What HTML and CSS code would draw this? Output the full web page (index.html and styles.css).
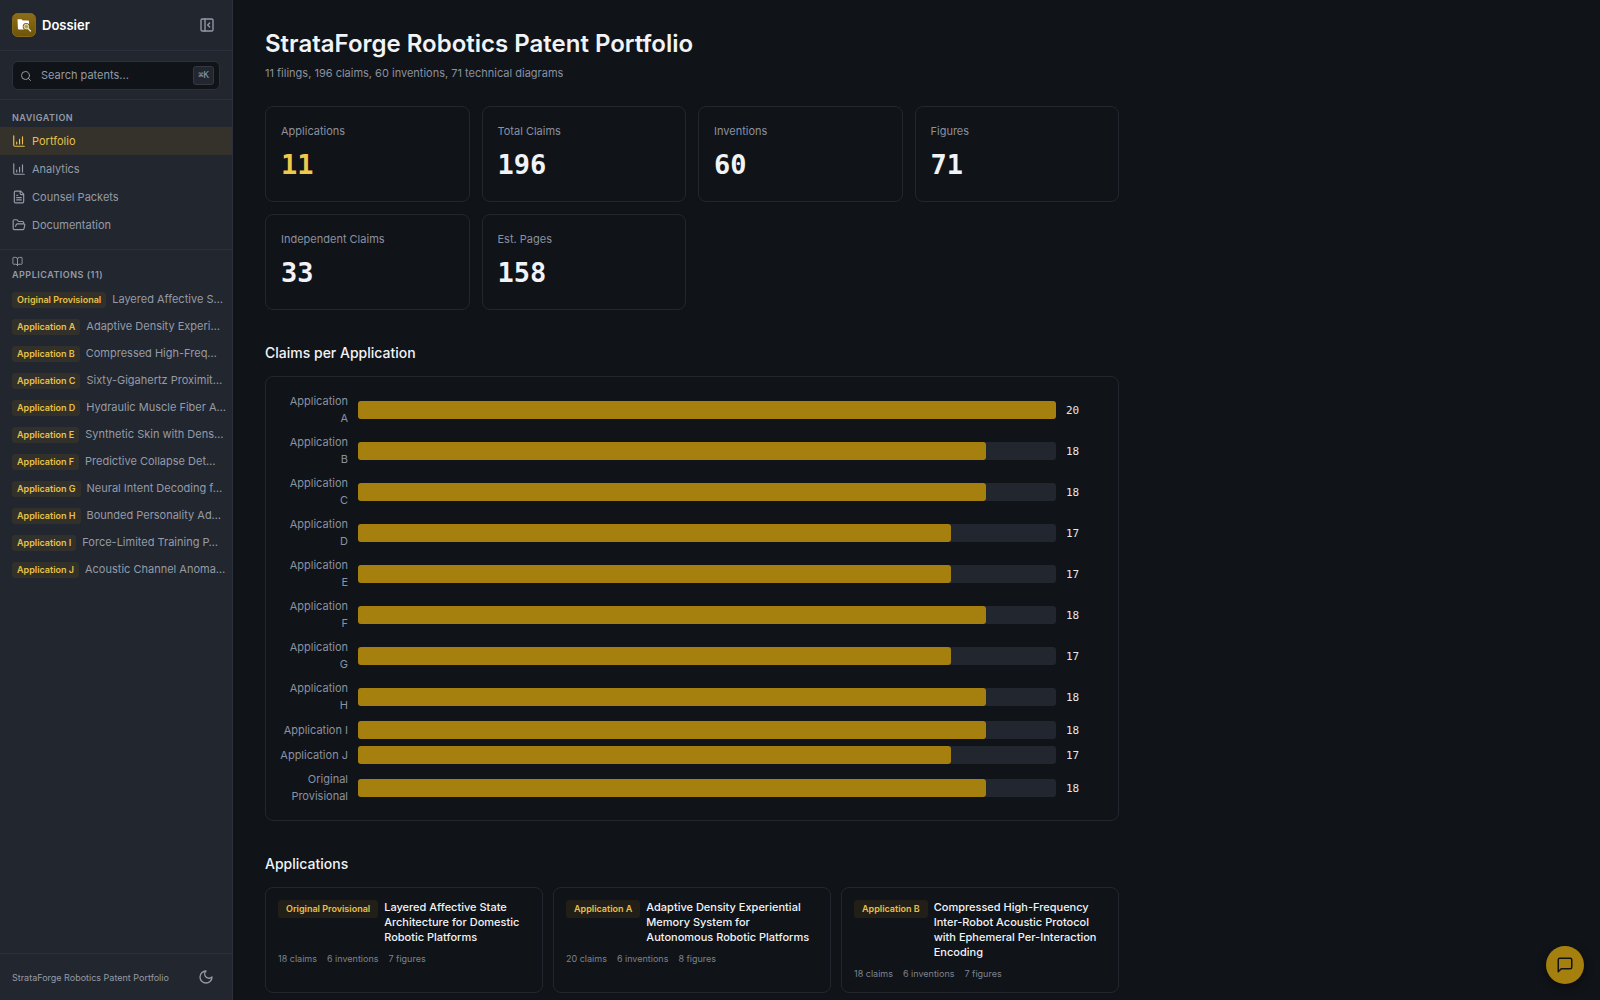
FILE: index.html
```
<!DOCTYPE html>
<html lang="en">
<head>
	<meta charset="UTF-8">
	<meta name="viewport" content="width=device-width, initial-scale=1">
	<title>StrataForge Robotics Patent Portfolio</title>
	<link rel="stylesheet" href="styles.css">
</head>
<body>

	<aside class="sidebar">
		<div class="brand">
			<svg class="logo" viewBox="0 0 24 24">
				<defs>
					<linearGradient id="gold" x1="0" y1="0" x2="0" y2="1">
						<stop offset="0" stop-color="#8c6d18"/>
						<stop offset="1" stop-color="#6f5508"/>
					</linearGradient>
				</defs>
				<rect x="0.5" y="0.5" width="23" height="23" rx="5" fill="url(#gold)" stroke="#84681c"/>
				<path d="M5.500 6.200h4l1.200 1.300h5.300a1 1 0 0 1 1 1v7a1 1 0 0 1-1 1H6.900a1 1 0 0 1-1-1z" fill="#fff"/>
				<circle cx="14.300" cy="13.600" r="2.600" fill="#b39d5c" stroke="#7a5f10" stroke-width="2"/>
				<circle cx="14.300" cy="13.600" r="2.300" fill="#b39d5c" stroke="#efe6cc" stroke-width="1"/>
				<path d="M16.300 15.700l2.200 2.300" stroke="#f3ead0" stroke-width="1.300" stroke-linecap="round"/>
			</svg>
			<span class="brand-name">Dossier</span>
			<button class="icon-button" aria-label="Collapse sidebar">
				<svg class="icon" viewBox="0 0 24 24"><rect x="3" y="3" width="18" height="18" rx="2"/><path d="M9 3v18M16 15l-3-3 3-3"/></svg>
			</button>
		</div>

		<div class="search-wrap">
			<div class="search">
				<svg class="icon small" viewBox="0 0 24 24"><circle cx="11" cy="11" r="8"/><path d="M21 21l-4.300-4.300"/></svg>
				<input type="text" class="search-input" placeholder="Search patents..." aria-label="Search patents">
				<kbd>⌘K</kbd>
			</div>
		</div>

		<nav class="nav">
			<h2 class="label">Navigation</h2>
			<a href="#" class="active">
				<svg class="icon" viewBox="0 0 24 24"><path d="M3 3v16a2 2 0 0 0 2 2h16M18 17V5M13 17V9M8 17v-3"/></svg>
				Portfolio
			</a>
			<a href="#">
				<svg class="icon" viewBox="0 0 24 24"><path d="M3 3v16a2 2 0 0 0 2 2h16M18 17V5M13 17V9M8 17v-3"/></svg>
				Analytics
			</a>
			<a href="#">
				<svg class="icon" viewBox="0 0 24 24"><path d="M15 2H6a2 2 0 0 0-2 2v16a2 2 0 0 0 2 2h12a2 2 0 0 0 2-2V7zM14 2v4a2 2 0 0 0 2 2h4M10 9H8M16 13H8M16 17H8"/></svg>
				Counsel Packets
			</a>
			<a href="#">
				<svg class="icon" viewBox="0 0 24 24"><path d="M6 14l1.500-2.900A2 2 0 0 1 9.240 10H20a2 2 0 0 1 1.940 2.500l-1.540 6a2 2 0 0 1-1.950 1.500H4a2 2 0 0 1-2-2V5a2 2 0 0 1 2-2h3.900a2 2 0 0 1 1.690.9l.81 1.200a2 2 0 0 0 1.670.9H18a2 2 0 0 1 2 2v2"/></svg>
				Documentation
			</a>
		</nav>

		<div class="apps">
			<svg class="icon tiny" viewBox="0 0 24 24"><path d="M12 7v14M3 18a1 1 0 0 1-1-1V4a1 1 0 0 1 1-1h5a4 4 0 0 1 4 4 4 4 0 0 1 4-4h5a1 1 0 0 1 1 1v13a1 1 0 0 1-1 1h-6a3 3 0 0 0-3 3 3 3 0 0 0-3-3z"/></svg>
			<h2 class="label">Applications (11)</h2>
			<a href="#"><span class="badge">Original Provisional</span><span class="name">Layered Affective S…</span></a>
			<a href="#"><span class="badge">Application A</span><span class="name">Adaptive Density Experi…</span></a>
			<a href="#"><span class="badge">Application B</span><span class="name">Compressed High-Freq…</span></a>
			<a href="#"><span class="badge">Application C</span><span class="name">Sixty-Gigahertz Proximit…</span></a>
			<a href="#"><span class="badge">Application D</span><span class="name">Hydraulic Muscle Fiber A…</span></a>
			<a href="#"><span class="badge">Application E</span><span class="name">Synthetic Skin with Dens…</span></a>
			<a href="#"><span class="badge">Application F</span><span class="name">Predictive Collapse Det…</span></a>
			<a href="#"><span class="badge">Application G</span><span class="name">Neural Intent Decoding f…</span></a>
			<a href="#"><span class="badge">Application H</span><span class="name">Bounded Personality Ad…</span></a>
			<a href="#"><span class="badge">Application I</span><span class="name">Force-Limited Training P…</span></a>
			<a href="#"><span class="badge">Application J</span><span class="name">Acoustic Channel Anoma…</span></a>
		</div>

		<div class="sidebar-footer">
			<span>StrataForge Robotics Patent Portfolio</span>
			<button class="icon-button" aria-label="Toggle theme">
				<svg class="icon" viewBox="0 0 24 24"><path d="M12 3a6 6 0 0 0 9 9 9 9 0 1 1-9-9z"/></svg>
			</button>
		</div>
	</aside>

	<main class="main">
		<div class="content">
			<h1>StrataForge Robotics Patent Portfolio</h1>
			<p class="subtitle">11 filings, 196 claims, 60 inventions, 71 technical diagrams</p>

			<div class="stats">
				<div class="card stat"><span>Applications</span><strong class="gold">11</strong></div>
				<div class="card stat"><span>Total Claims</span><strong>196</strong></div>
				<div class="card stat"><span>Inventions</span><strong>60</strong></div>
				<div class="card stat"><span>Figures</span><strong>71</strong></div>
				<div class="card stat"><span>Independent Claims</span><strong>33</strong></div>
				<div class="card stat"><span>Est. Pages</span><strong>158</strong></div>
			</div>

			<h2 class="section-title">Claims per Application</h2>
			<div class="card chart">
				<div class="row"><span class="row-label">Application<br>A</span><div class="track"><div class="fill" style="width: 100%"></div></div><span class="value">20</span></div>
				<div class="row"><span class="row-label">Application<br>B</span><div class="track"><div class="fill" style="width: 90%"></div></div><span class="value">18</span></div>
				<div class="row"><span class="row-label">Application<br>C</span><div class="track"><div class="fill" style="width: 90%"></div></div><span class="value">18</span></div>
				<div class="row"><span class="row-label">Application<br>D</span><div class="track"><div class="fill" style="width: 85%"></div></div><span class="value">17</span></div>
				<div class="row"><span class="row-label">Application<br>E</span><div class="track"><div class="fill" style="width: 85%"></div></div><span class="value">17</span></div>
				<div class="row"><span class="row-label">Application<br>F</span><div class="track"><div class="fill" style="width: 90%"></div></div><span class="value">18</span></div>
				<div class="row"><span class="row-label">Application<br>G</span><div class="track"><div class="fill" style="width: 85%"></div></div><span class="value">17</span></div>
				<div class="row"><span class="row-label">Application<br>H</span><div class="track"><div class="fill" style="width: 90%"></div></div><span class="value">18</span></div>
				<div class="row"><span class="row-label">Application I</span><div class="track"><div class="fill" style="width: 90%"></div></div><span class="value">18</span></div>
				<div class="row"><span class="row-label">Application J</span><div class="track"><div class="fill" style="width: 85%"></div></div><span class="value">17</span></div>
				<div class="row"><span class="row-label">Original<br>Provisional</span><div class="track"><div class="fill" style="width: 90%"></div></div><span class="value">18</span></div>
			</div>

			<h2 class="section-title">Applications</h2>
			<div class="app-cards">
				<a href="#" class="card app">
					<div class="app-head">
						<span class="badge">Original Provisional</span>
						<h3>Layered Affective State Architecture for Domestic Robotic Platforms</h3>
					</div>
					<div class="meta"><span>18 claims</span><span>6 inventions</span><span>7 figures</span></div>
				</a>
				<a href="#" class="card app">
					<div class="app-head">
						<span class="badge">Application A</span>
						<h3>Adaptive Density Experiential Memory System for Autonomous Robotic Platforms</h3>
					</div>
					<div class="meta"><span>20 claims</span><span>6 inventions</span><span>8 figures</span></div>
				</a>
				<a href="#" class="card app">
					<div class="app-head">
						<span class="badge">Application B</span>
						<h3>Compressed High-Frequency Inter-Robot Acoustic Protocol with Ephemeral Per-Interaction Encoding</h3>
					</div>
					<div class="meta"><span>18 claims</span><span>6 inventions</span><span>7 figures</span></div>
				</a>
			</div>
		</div>
	</main>

	<button class="chat" aria-label="Open chat">
		<svg class="icon" viewBox="0 0 24 24"><path d="M21 15a2 2 0 0 1-2 2H7l-4 4V5a2 2 0 0 1 2-2h14a2 2 0 0 1 2 2z"/></svg>
	</button>

</body>
</html>
```
FILE: styles.css
```
* {
	box-sizing: border-box;
}

body {
	margin: 0;
	height: 100vh;
	display: flex;
	font-family: Inter, sans-serif;
	font-size: 11px;
	line-height: 17px;
	background: #101317;
	color: #f1f3f7;
}

h1, h2, h3, p {
	margin: 0;
}

a {
	color: inherit;
	text-decoration: none;
}

button {
	padding: 0;
	border: none;
	background: none;
	color: inherit;
	cursor: pointer;
}

.icon {
	display: block;
	width: 14px;
	height: 14px;
	flex: none;
	fill: none;
	stroke: currentColor;
	stroke-width: 2;
	stroke-linecap: round;
	stroke-linejoin: round;
}

.icon.small {
	width: 12px;
	height: 12px;
}

.icon.tiny {
	width: 11px;
	height: 11px;
}

/* sidebar */

.sidebar {
	width: 233px;
	flex: none;
	display: flex;
	flex-direction: column;
	background: #22262e;
	border-right: 1px solid #2b303a;
	color: #949ba8;
}

.brand {
	display: flex;
	align-items: center;
	gap: 6px;
	padding: 13px 12px;
	border-bottom: 1px solid #2b303a;
}

.logo {
	width: 24px;
	height: 24px;
}

.brand-name {
	flex: 1;
	font-size: 13px;
	line-height: 24px;
	font-weight: 600;
	color: #fff;
}

.icon-button {
	width: 26px;
	height: 24px;
	display: flex;
	align-items: center;
	justify-content: center;
}

.icon-button .icon {
	width: 16px;
	height: 16px;
}

.search-wrap {
	padding: 10px 12px 9px;
	border-bottom: 1px solid #2b303a;
}

.search {
	display: flex;
	align-items: center;
	gap: 9px;
	height: 29px;
	padding: 0 5px 0 7px;
	border: 1px solid #2b303a;
	border-radius: 6px;
	background: #101317;
}

.search-input {
	flex: 1;
	min-width: 0;
	padding: 0;
	border: none;
	outline: none;
	background: none;
	font: inherit;
	color: inherit;
}

.search-input::placeholder {
	color: inherit;
	opacity: 1;
}

kbd {
	padding: 0 4px;
	border: 1px solid #333842;
	border-radius: 3px;
	background: #22262e;
	font-family: "DejaVu Sans Mono", monospace;
	font-size: 9px;
}

.label {
	font-size: 9px;
	line-height: 15px;
	font-weight: 600;
	letter-spacing: 0.5px;
	text-transform: uppercase;
}

.nav {
	padding: 10px 0;
	border-bottom: 1px solid #2b303a;
}

.nav .label {
	padding: 0 12px 2px;
}

.nav a {
	display: flex;
	align-items: center;
	gap: 6px;
	height: 28px;
	padding: 0 12px;
}

.nav .active {
	background: #34322a;
	color: #e8c148;
}

.apps {
	flex: 1;
	padding: 6px 6px 6px 12px;
}

.apps .label {
	padding-bottom: 4px;
}

.apps a {
	display: flex;
	align-items: center;
	gap: 6px;
	height: 27px;
}

.badge {
	flex: none;
	padding: 0 5px;
	border-radius: 3px;
	background: #31302a;
	font-size: 9px;
	line-height: 16px;
	font-weight: 600;
	color: #e8c148;
}

.name {
	white-space: nowrap;
}

.sidebar-footer {
	display: flex;
	align-items: center;
	justify-content: space-between;
	height: 47px;
	padding: 0 13px 0 12px;
	border-top: 1px solid #2b303a;
	font-size: 9px;
}

/* main area */

.main {
	flex: 1;
	overflow-y: auto;
	scrollbar-width: none;
	padding: 28px 32px 0;
}

.content {
	max-width: 854px;
}

h1 {
	font-size: 24px;
	line-height: 32px;
	font-weight: 600;
}

.subtitle {
	padding: 5px 0 24px;
	color: #8a91a0;
}

.card {
	border: 1px solid #22262e;
	border-radius: 8px;
}

.stats {
	display: grid;
	grid-template-columns: repeat(4, 1fr);
	gap: 12px;
}

.stat {
	display: flex;
	flex-direction: column;
	gap: 8px;
	height: 96px;
	padding: 16px 15px;
	color: #8a91a0;
}

.stat strong {
	font-family: "DejaVu Sans Mono", monospace;
	font-size: 27px;
	line-height: 34px;
	color: #f1f3f7;
}

.stat .gold {
	color: #f0c84c;
}

.section-title {
	padding: 31px 0 11px;
	font-size: 14px;
	line-height: 24px;
	font-weight: 500;
}

.chart {
	display: flex;
	flex-direction: column;
	gap: 7px;
	padding: 16px 17px 15px 13px;
}

.row {
	display: flex;
	align-items: center;
	gap: 10px;
}

.row-label {
	width: 69px;
	text-align: right;
	color: #8a91a0;
}

.track {
	flex: 1;
	height: 18px;
	border-radius: 3px;
	background: #22262e;
}

.fill {
	height: 100%;
	border-radius: 3px;
	background: #a6800e;
}

.value {
	width: 35px;
	font-family: "DejaVu Sans Mono", monospace;
	color: #e4e7ec;
}

.app-cards {
	display: grid;
	grid-template-columns: repeat(3, 1fr);
	gap: 10px;
}

.app {
	padding: 12px 12px 11px;
}

.app-head {
	display: flex;
	align-items: flex-start;
	gap: 6px;
}

.app .badge {
	padding: 1px 8px;
	background: #221f18;
}

.app h3 {
	font-size: 11px;
	line-height: 15px;
	font-weight: 500;
}

.meta {
	display: flex;
	gap: 10px;
	padding-top: 6px;
	font-size: 9px;
	line-height: 15px;
	color: #7c8392;
}

/* chat button floats over the page */

.chat {
	position: fixed;
	right: 16px;
	bottom: 16px;
	width: 38px;
	height: 38px;
	display: flex;
	align-items: center;
	justify-content: center;
	border-radius: 50%;
	background: #a6800e;
	color: #101317;
	box-shadow: 0 3px 10px rgba(0, 0, 0, 0.4);
}

.chat .icon {
	width: 18px;
	height: 18px;
}
```
